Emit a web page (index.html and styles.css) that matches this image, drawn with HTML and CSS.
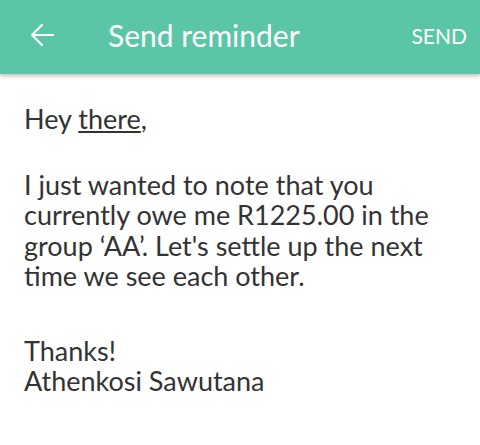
FILE: index.html
```html
<!DOCTYPE html>
<html>
<head>
<meta charset="utf-8">
<link rel="stylesheet" href="styles.css">
</head>
<body>
<header class="bar">
  <span class="back">
    <svg width="26" height="26" viewBox="0 0 26 26"><path d="M24 13H3M13 3L3 13l10 10" fill="none" stroke="#fff" stroke-width="2.2" stroke-linecap="round" stroke-linejoin="round"/></svg>
  </span>
  <h1 class="title">Send reminder</h1>
  <span class="send">SEND</span>
</header>
<main class="msg">
  <p class="p1">Hey <u>there</u>,</p>
  <p class="p2">I just wanted to note that you currently owe me R1225.00 in the group ‘AA’. Let's settle up the next time we see each other.</p>
  <p class="p3">Thanks!<br>Athenkosi Sawutana</p>
</main>
</body>
</html>
```
FILE: styles.css
```css
* { box-sizing: border-box; }
body {
  margin: 0;
  width: 480px;
  height: 445px;
  background: #fff;
  font-family: Lato, "Open Sans", sans-serif;
  overflow: hidden;
}
.bar {
  height: 74px;
  background: #5bc5a7;
  display: flex;
  align-items: center;
  padding: 0 13px 0 29px;
  box-shadow: 0 2px 4px rgba(0,0,0,0.25);
  color: #fff;
}
.back { display: flex; width: 26px; height: 26px; margin-top: -4px; }
.title {
  margin: -4px 0 0 53px;
  font-size: 30px;
  font-weight: 400;
  flex: 1;
}
.send { font-size: 21px; margin-top: -4px; }
.msg {
  padding: 0 24px;
  color: #333;
  font-size: 27px;
  line-height: 30.5px;
}
.msg p { margin: 0; }
.p1 { margin-top: 30px !important; }
.p2 { margin-top: 35px !important; }
.p3 { margin-top: 44px !important; }
u { text-underline-offset: 2px; text-decoration-thickness: 2px; }
```
